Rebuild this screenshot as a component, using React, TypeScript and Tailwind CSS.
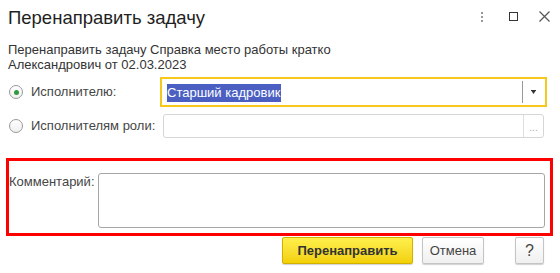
import React from 'react';

function Radio({ checked }: { checked?: boolean }) {
  return (
    <div className="w-[14px] h-[14px] rounded-full border border-[#9a9a9a] bg-gradient-to-b from-white to-[#f0f0f0] flex items-center justify-center">
      {checked && <div className="w-[5px] h-[5px] rounded-full bg-[#2e9a3e]" />}
    </div>
  );
}

function Button({ children, primary, className = '' }: { children: React.ReactNode; primary?: boolean; className?: string }) {
  return (
    <button
      className={`h-[27px] rounded-[2px] border text-[13px] shadow-[0_1px_1px_rgba(0,0,0,0.18)] ${
        primary
          ? 'bg-gradient-to-b from-[#fff04a] to-[#f2d000] border-[#d2b000] font-bold text-[#333]'
          : 'bg-gradient-to-b from-white to-[#f0f0f0] border-[#c4c4c4] text-[#444]'
      } ${className}`}
    >
      {children}
    </button>
  );
}

export default function App() {
  return (
    <div className="w-[560px] h-[273px] bg-white overflow-hidden font-['Liberation_Sans',Arial,sans-serif] text-[#454545]">
      {/* header */}
      <div className="h-[42px] flex items-start justify-between pl-[8px] pt-[6px]">
        <h1 className="text-[18.5px] leading-[24px] text-[#1f1f1f]">Перенаправить задачу</h1>
        <div className="flex items-center pt-[5px]">
          <div className="flex flex-col gap-[2px] w-[4px] items-center mr-[25px]">
            <span className="w-[2px] h-[2px] bg-[#777] rounded-full" />
            <span className="w-[2px] h-[2px] bg-[#777] rounded-full" />
            <span className="w-[2px] h-[2px] bg-[#777] rounded-full" />
          </div>
          <div className="w-[9px] h-[9px] border-[1.5px] border-[#333] mr-[21px]" />
          <svg width="11" height="11" viewBox="0 0 11 11" className="mr-[10px]">
            <path d="M0.5 0.5 L10.5 10.5 M10.5 0.5 L0.5 10.5" stroke="#555" strokeWidth="1.2" />
          </svg>
        </div>
      </div>

      {/* description */}
      <div className="pl-[8px] text-[13px] leading-[15px] text-[#333]">
        <div>Перенаправить задачу Справка место работы кратко</div>
        <div>Александрович от 02.03.2023</div>
      </div>

      {/* row 1 */}
      <div className="mt-[5px] flex items-center h-[30px]">
        <div className="w-[31px] pl-[9px]">
          <Radio checked />
        </div>
        <div className="w-[129px] text-[13px]">Исполнителю:</div>
        <div className="w-[387px] h-[30px] border-[2px] border-[#f6c81c] flex items-center pl-[5px] pr-[1px]">
          <div className="flex-1">
            <span className="inline-block bg-[#4b5fc3] text-white text-[13px] leading-[18px] pr-[1px]">Старший кадровик</span>
          </div>
          <div className="w-[22px] h-[22px] border-l border-[#999] flex items-center justify-center">
            <svg width="5" height="4" viewBox="0 0 5 4">
              <path d="M0 0 H5 V1 H4.5 L2.5 4 L0.5 1 H0 Z" fill="#333" />
            </svg>
          </div>
        </div>
      </div>

      {/* row 2 */}
      <div className="mt-[7px] flex items-center h-[24px]">
        <div className="w-[31px] pl-[9px]">
          <Radio />
        </div>
        <div className="w-[132px] text-[13px]">Исполнителям роли:</div>
        <div className="w-[381px] h-[24px] border border-[#d6d6d6] rounded-[3px] flex">
          <div className="flex-1" />
          <div className="w-[20px] border-l border-[#dedede] flex items-end justify-center pb-[3px] text-[10px] leading-[12px] text-[#aaa]">
            ...
          </div>
        </div>
      </div>

      {/* comment */}
      <div className="mt-[20px] ml-[6px] w-[547px] h-[78px] border-[3px] border-[#ff0000] flex pt-[12px]">
        <div className="w-[89px] text-[13px] leading-[15px] mt-[1px]">Комментарий:</div>
        <div className="w-[447px] h-[55px] border border-[#a6a6a6] rounded-[3px] bg-white" />
      </div>

      {/* buttons */}
      <div className="mt-[1px] flex justify-end pr-[16px]">
        <Button primary className="w-[131px]">Перенаправить</Button>
        <Button className="w-[62px] ml-[9px]">Отмена</Button>
        <Button className="w-[29px] ml-[31px] !text-[16px] text-[#222]">?</Button>
      </div>
    </div>
  );
}
